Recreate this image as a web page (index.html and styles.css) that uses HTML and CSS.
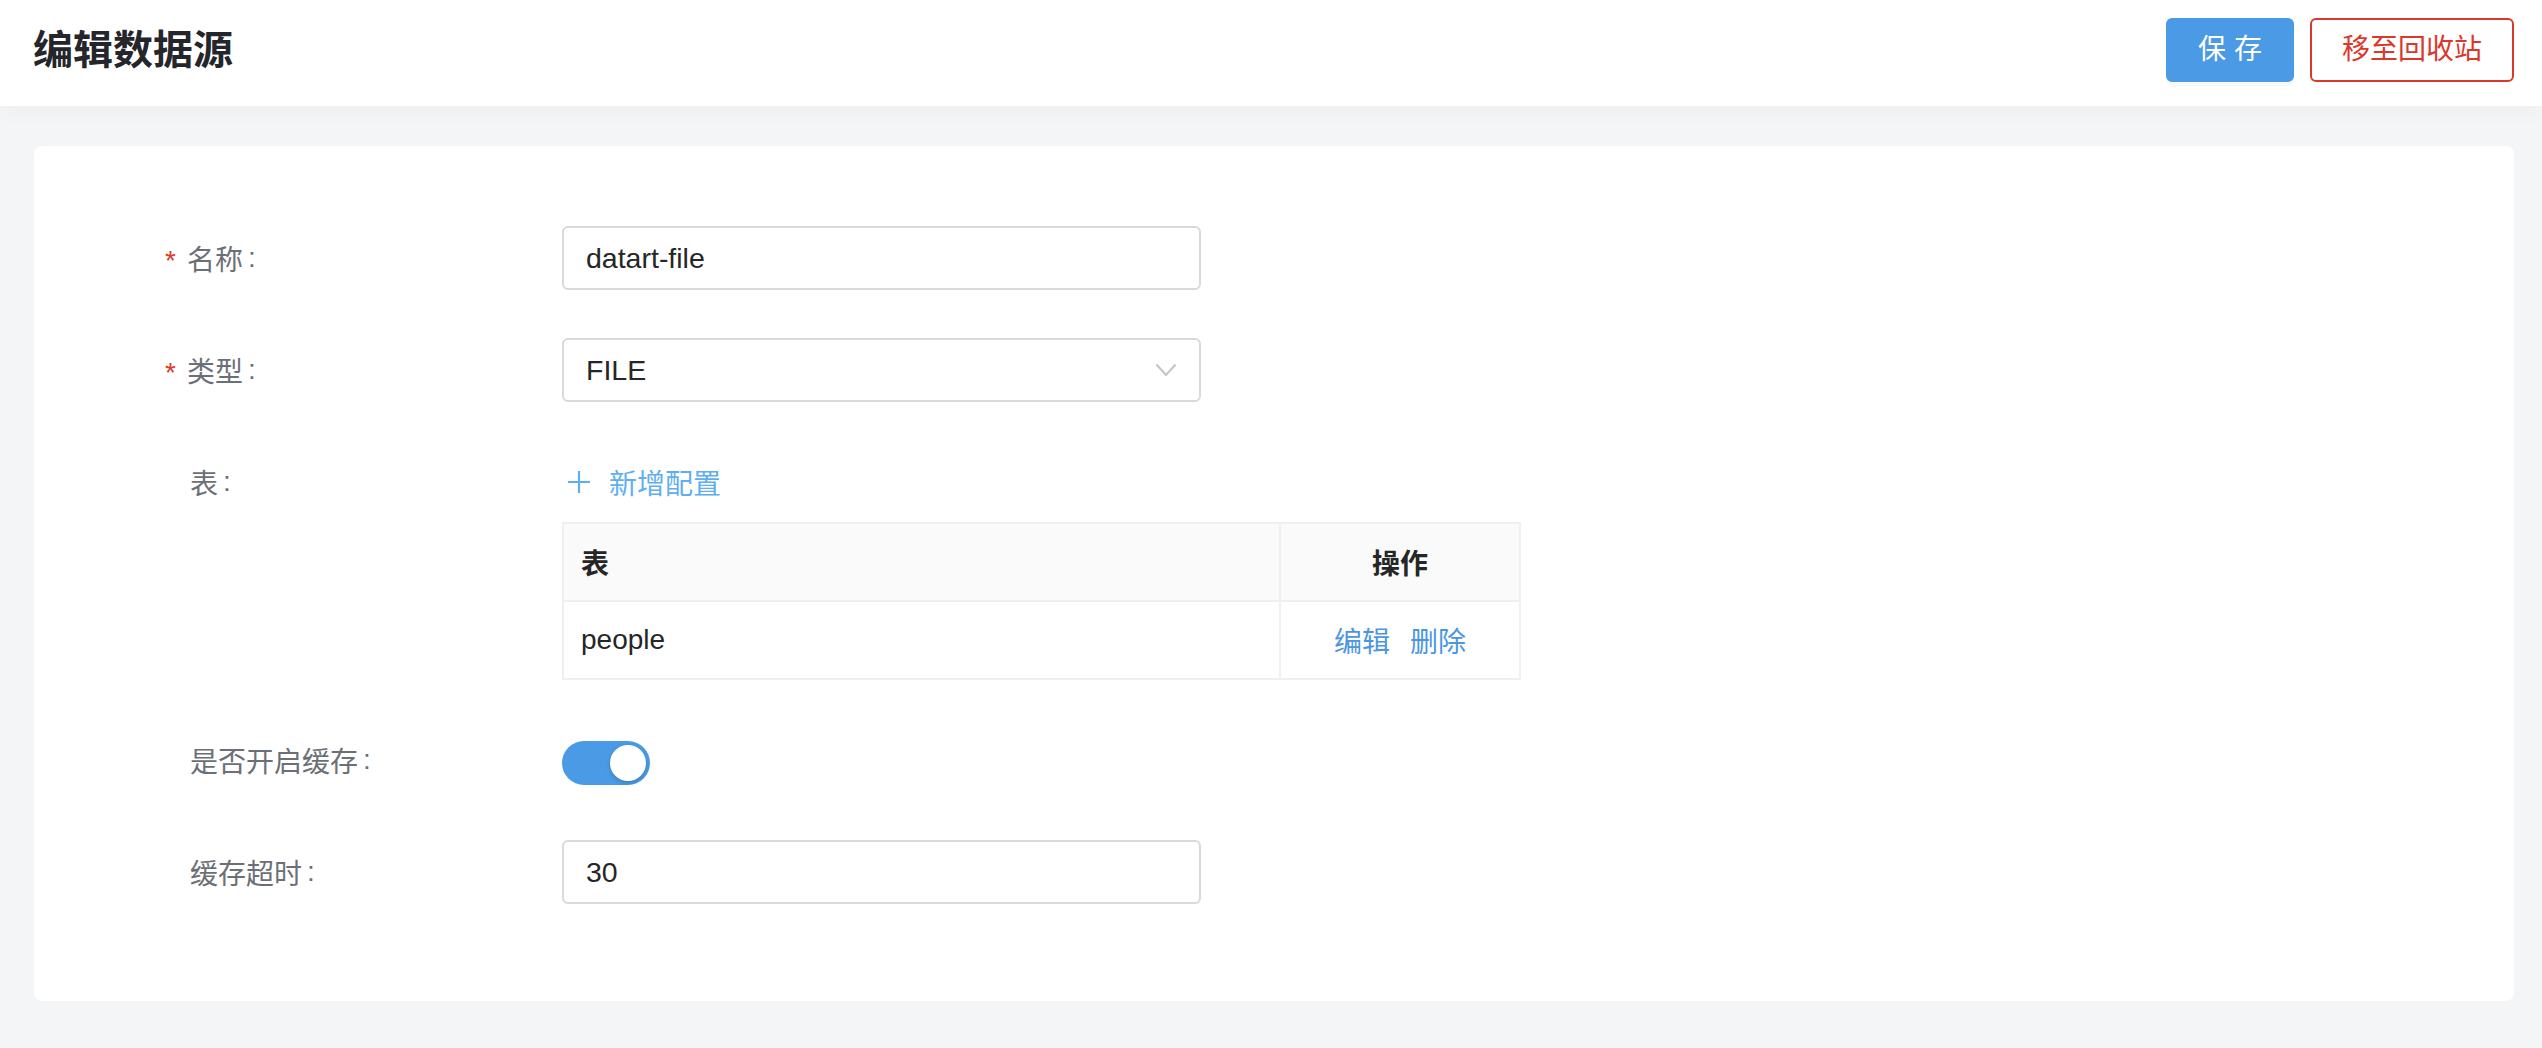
FILE: index.html
```html
<!DOCTYPE html>
<html>
<head>
  <meta charset="utf-8">
  <title>编辑数据源</title>
  <link rel="stylesheet" href="styles.css">
</head>
<body>
  <div class="page">
    <header class="topbar">
      <h1 class="title">编辑数据源</h1>
      <div class="actions">
        <button class="btn btn-primary">保 存</button>
        <button class="btn btn-danger">移至回收站</button>
      </div>
    </header>

    <main class="content">
      <section class="card">
        <form class="form">
          <div class="form-row">
            <label class="form-label"><span class="required">*</span>名称<span class="colon">:</span></label>
            <div class="form-field">
              <input class="input" type="text" value="datart-file">
            </div>
          </div>

          <div class="form-row">
            <label class="form-label"><span class="required">*</span>类型<span class="colon">:</span></label>
            <div class="form-field">
              <div class="input select">
                <span>FILE</span>
                <svg class="chevron" width="22" height="14" viewBox="0 0 22 14"><polyline points="1.5,1.5 11,12 20.5,1.5" fill="none" stroke="#c4c4c4" stroke-width="2"/></svg>
              </div>
            </div>
          </div>

          <div class="form-row">
            <label class="form-label">表<span class="colon">:</span></label>
            <div class="form-field">
              <a class="add-link">
                <svg width="24" height="24" viewBox="0 0 24 24"><path d="M12 1v22M1 12h22" stroke="#5eaef0" stroke-width="2.2" fill="none"/></svg>
                <span>新增配置</span>
              </a>
              <table class="table">
                <thead>
                  <tr><th class="col-name">表</th><th class="col-ops">操作</th></tr>
                </thead>
                <tbody>
                  <tr>
                    <td>people</td>
                    <td class="col-ops"><a class="op">编辑</a><a class="op">删除</a></td>
                  </tr>
                </tbody>
              </table>
            </div>
          </div>

          <div class="form-row">
            <label class="form-label">是否开启缓存<span class="colon">:</span></label>
            <div class="form-field">
              <div class="switch"><span class="knob"></span></div>
            </div>
          </div>

          <div class="form-row">
            <label class="form-label">缓存超时<span class="colon">:</span></label>
            <div class="form-field">
              <input class="input" type="text" value="30">
            </div>
          </div>
        </form>
      </section>
    </main>
  </div>
</body>
</html>
```

FILE: styles.css
```css
    body {
      margin: 0;
      font-family: "Liberation Sans", "Noto Sans CJK SC", sans-serif;
      color: #262626;
      background-color: #f4f5f7;
    }

    .page {
      min-height: 100vh;
      display: flex;
      flex-direction: column;
    }

    .topbar {
      height: 106px;
      box-sizing: border-box;
      padding: 0 28px 6px 33px;
      display: flex;
      align-items: center;
      justify-content: space-between;
      background-color: #fff;
      box-shadow: 0 4px 22px rgba(0, 0, 0, 0.035);
      position: relative;
    }

    .title {
      margin: 0;
      font-size: 40px;
      font-weight: 700;
      line-height: 50px;
      color: #24262b;
    }

    .actions {
      display: flex;
      gap: 16px;
    }

    .btn {
      height: 64px;
      border-radius: 6px;
      font-family: inherit;
      font-size: 28px;
      line-height: 1;
      cursor: pointer;
      box-sizing: border-box;
    }

    .btn-primary {
      width: 128px;
      border: 2px solid #4a9ae6;
      background-color: #4a9ae6;
      color: #fff;
      box-shadow: 0 4px 0 rgba(0, 0, 0, 0.025);
    }

    .btn-danger {
      width: 204px;
      border: 2px solid #d9382b;
      background-color: #fff;
      color: #d9382b;
    }

    .content {
      flex: 1;
      padding: 40px 28px 46px 34px;
    }

    .card {
      background-color: #fff;
      border-radius: 8px;
      padding: 80px 0 97px;
    }

    .form-row {
      display: grid;
      grid-template-columns: 528px 1fr;
      margin-bottom: 48px;
    }

    .form-row:last-child {
      margin-bottom: 0;
    }

    .form-label {
      padding-left: 156px;
      height: 64px;
      display: flex;
      align-items: center;
      font-size: 28px;
      color: #6b7077;
    }

    .required {
      color: #e0392b;
      margin-left: -25px;
      margin-right: 11px;
      font-size: 28px;
      line-height: 1;
      position: relative;
      top: 3px;
    }

    .colon {
      margin-left: 5px;
    }

    .input {
      width: 639px;
      height: 64px;
      box-sizing: border-box;
      border: 2px solid #d9d9d9;
      border-radius: 6px;
      padding: 0 22px;
      font-family: inherit;
      font-size: 28.5px;
      color: #262626;
      background-color: #fff;
      outline: none;
    }

    .select {
      display: flex;
      align-items: center;
      justify-content: space-between;
      padding-right: 22px;
    }

    .chevron {
      display: block;
    }

    .add-link {
      height: 64px;
      display: flex;
      align-items: center;
      gap: 18px;
      padding-left: 5px;
      font-size: 28px;
      color: #5eaef0;
      cursor: pointer;
    }

    .add-link svg {
      display: block;
    }

    .table {
      margin-top: 8px;
      width: 959px;
      border-collapse: collapse;
      font-size: 28px;
    }

    .table th,
    .table td {
      border: 2px solid #efefef;
      height: 76px;
      padding: 0 17px;
      text-align: left;
      color: #262626;
    }

    .table th {
      background-color: #fafafa;
      font-weight: 700;
    }

    .table .col-ops {
      width: 204px;
      text-align: center;
    }

    .op {
      color: #4a96e3;
      cursor: pointer;
    }

    .op + .op {
      margin-left: 20px;
    }

    .switch {
      margin-top: 13px;
      width: 88px;
      height: 44px;
      box-sizing: border-box;
      padding: 4px;
      border-radius: 22px;
      background-color: #4a9ae6;
      display: flex;
      justify-content: flex-end;
    }

    .knob {
      width: 36px;
      height: 36px;
      border-radius: 50%;
      background-color: #fff;
      box-shadow: 0 2px 4px rgba(0, 35, 11, 0.2);
    }
```
